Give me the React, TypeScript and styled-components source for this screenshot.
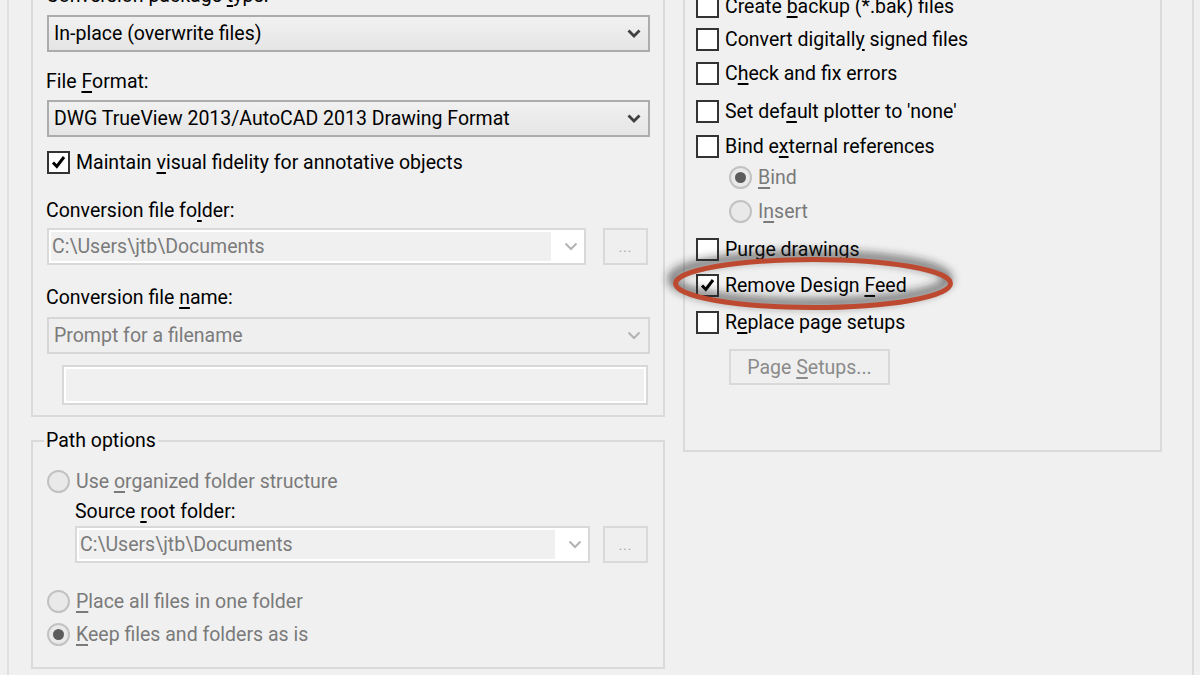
import React from "react";
import styled, { createGlobalStyle } from "styled-components";

const Global = createGlobalStyle`
  html, body { margin: 0; padding: 0; background: #f0f0f0; }
  body { font-family: Roboto, "Noto Sans", sans-serif; }
`;

const Screen = styled.div`
  width: 1200px;
  height: 675px;
  overflow: hidden;
  background: #f0f0f0;
  font-family: Roboto, "Noto Sans", sans-serif;
  font-size: 19.5px;
  color: #000;
`;

const Frame = styled.div`
  margin-left: 7px;
  width: 1187px;
  height: 675px;
  box-sizing: border-box;
  border-left: 2px solid #e1e1e1;
  border-right: 2px solid #dcdcdc;
  padding-left: 22px;
  display: grid;
  grid-template-columns: 634px 479px;
  column-gap: 18px;
  align-items: start;
`;

const Column = styled.div`
  display: flex;
  flex-direction: column;
  margin-top: -40px;
`;

const GroupBox = styled.fieldset<{ $pad: string; $mt?: number }>`
  margin: ${(p) => p.$mt ?? 0}px 0 0 0;
  min-width: 0;
  padding: ${(p) => p.$pad};
  border: 2px solid #dadada;
  display: flex;
  flex-direction: column;
  align-items: flex-start;
`;

const Legend = styled.legend`
  padding: 0 2px;
  margin-left: -3px;
  height: 24px;
  line-height: 24px;
  color: #000;
`;

const Mn = styled.u`
  text-decoration: underline;
  text-decoration-thickness: 1.5px;
  text-underline-offset: 3px;
`;

const Label = styled.div<{ $mt?: number; $ml?: number }>`
  height: 24px;
  line-height: 24px;
  white-space: nowrap;
  margin-top: ${(p) => p.$mt ?? 0}px;
  margin-left: ${(p) => p.$ml ?? -1}px;
`;

const Select = styled.div<{ $mt?: number; $disabled?: boolean }>`
  width: 603px;
  height: 37px;
  box-sizing: border-box;
  margin-top: ${(p) => p.$mt ?? 0}px;
  border: 2px solid ${(p) => (p.$disabled ? "#d6d6d6" : "#acacac")};
  background: ${(p) =>
    p.$disabled ? "#efefef" : "linear-gradient(#f1f1f1, #e5e5e5)"};
  color: ${(p) => (p.$disabled ? "#7b7b7b" : "#000")};
  display: flex;
  align-items: center;
  justify-content: space-between;
  padding: 0 7px 0 5px;
  white-space: nowrap;
`;

const ComboLine = styled.div<{ $mt?: number; $ml?: number; $gap: number }>`
  display: flex;
  gap: ${(p) => p.$gap}px;
  margin-top: ${(p) => p.$mt ?? 0}px;
  margin-left: ${(p) => p.$ml ?? 0}px;
`;

const Combo = styled.div<{ $w: number }>`
  width: ${(p) => p.$w}px;
  height: 37px;
  box-sizing: border-box;
  border: 2px solid #d9d9d9;
  background: #fff;
  padding: 2px;
  display: flex;
`;

const ComboText = styled.div`
  flex: 1;
  background: #f0f0f0;
  color: #7b7b7b;
  display: flex;
  align-items: center;
  padding-left: 1px;
  white-space: nowrap;
`;

const ComboArrow = styled.div`
  width: 31px;
  display: flex;
  align-items: center;
  justify-content: flex-end;
  padding-right: 4px;
  box-sizing: border-box;
`;

const Browse = styled.div`
  width: 45px;
  height: 37px;
  box-sizing: border-box;
  border: 2px solid #d9d9d9;
  background: #efefef;
  color: #a2a2a2;
  font-size: 13px;
  display: flex;
  align-items: flex-end;
  justify-content: center;
  padding-bottom: 8px;
  letter-spacing: 1px;
`;

const TextBox = styled.div<{ $mt?: number; $ml?: number }>`
  width: 586px;
  height: 40px;
  box-sizing: border-box;
  margin-top: ${(p) => p.$mt ?? 0}px;
  margin-left: ${(p) => p.$ml ?? 0}px;
  border: 2px solid #d8d8d8;
  box-shadow: inset 0 0 0 2px #fff;
  background: #f0f0f0;
`;

const Row = styled.div<{ $mt?: number; $ml?: number; $disabled?: boolean }>`
  position: relative;
  display: flex;
  align-items: center;
  gap: 6px;
  height: 24px;
  white-space: nowrap;
  margin-top: ${(p) => p.$mt ?? 0}px;
  margin-left: ${(p) => p.$ml ?? 0}px;
  color: ${(p) => (p.$disabled ? "#7a7a7a" : "#000")};
`;

const Box = styled.span`
  width: 23px;
  height: 23px;
  box-sizing: border-box;
  border: 2px solid #333;
  background: #fff;
  display: inline-flex;
  align-items: center;
  justify-content: center;
  flex: none;
`;

const RadioCircle = styled.span<{ $on?: boolean }>`
  width: 23px;
  height: 23px;
  box-sizing: border-box;
  border-radius: 50%;
  border: 2px solid #c2c2c2;
  background: #e9e9e9;
  display: inline-flex;
  align-items: center;
  justify-content: center;
  flex: none;
  &::after {
    content: "";
    width: 11px;
    height: 11px;
    border-radius: 50%;
    background: ${(p) => (p.$on ? "#5c5c5c" : "transparent")};
  }
`;

const PushButton = styled.div<{ $mt?: number; $ml?: number }>`
  width: 161px;
  height: 36px;
  box-sizing: border-box;
  margin-top: ${(p) => p.$mt ?? 0}px;
  margin-left: ${(p) => p.$ml ?? 0}px;
  border: 2px solid #d9d9d9;
  background: #efefef;
  color: #8b8b8b;
  display: flex;
  align-items: center;
  justify-content: center;
  white-space: nowrap;
`;

const Callout = styled.svg`
  position: absolute;
  left: -33px;
  top: -26px;
  width: 300px;
  height: 73px;
  overflow: visible;
  pointer-events: none;
`;

const mn = (s: string) => {
  const i = s.indexOf("&");
  if (i < 0) return s;
  return (
    <>
      {s.slice(0, i)}
      <Mn>{s[i + 1]}</Mn>
      {s.slice(i + 2)}
    </>
  );
};

const Chevron = ({ disabled }: { disabled?: boolean }) => (
  <svg width="14" height="9" viewBox="0 0 14 9">
    <path
      d="M1.5 1.5 L7 7 L12.5 1.5"
      fill="none"
      stroke={disabled ? "#b3b3b3" : "#3f3f3f"}
      strokeWidth={disabled ? 2 : 2.8}
    />
  </svg>
);

const Check = () => (
  <svg width="15" height="14" viewBox="0 0 15 14">
    <path d="M2 7.5 L5.8 11.5 L13 2" fill="none" stroke="#000" strokeWidth="3" />
  </svg>
);

const CheckRow = ({
  text,
  on,
  mt,
  ml,
  children,
}: {
  text: string;
  on?: boolean;
  mt?: number;
  ml?: number;
  children?: React.ReactNode;
}) => (
  <Row $mt={mt} $ml={ml}>
    <Box>{on && <Check />}</Box>
    <span>{mn(text)}</span>
    {children}
  </Row>
);

const RadioRow = ({ text, on, mt, ml }: { text: string; on?: boolean; mt?: number; ml?: number }) => (
  <Row $mt={mt} $ml={ml} $disabled>
    <RadioCircle $on={on} />
    <span>{mn(text)}</span>
  </Row>
);

const PathCombo = ({ w, mt, ml, gap }: { w: number; mt?: number; ml?: number; gap: number }) => (
  <ComboLine $mt={mt} $ml={ml} $gap={gap}>
    <Combo $w={w}>
      <ComboText>C:\Users\jtb\Documents</ComboText>
      <ComboArrow>
        <Chevron disabled />
      </ComboArrow>
    </Combo>
    <Browse>...</Browse>
  </ComboLine>
);

export default function App() {
  return (
    <Screen>
      <Global />
      <Frame>
        <Column>
          <GroupBox $pad="22px 13px 10px 14px">
            <Label>{mn("Conversion package &type:")}</Label>
            <Select $mt={7}>
              <span>In-place (overwrite files)</span>
              <Chevron />
            </Select>
            <Label $mt={18}>{mn("File &Format:")}</Label>
            <Select $mt={6}>
              <span>DWG TrueView 2013/AutoCAD 2013 Drawing Format</span>
              <Chevron />
            </Select>
            <CheckRow mt={13} on text="Maintain &visual fidelity for annotative objects" />
            <Label $mt={25}>{mn("Conversion file fo&lder:")}</Label>
            <PathCombo w={539} mt={5} gap={17} />
            <Label $mt={21}>{mn("Conversion file &name:")}</Label>
            <Select $mt={7} $disabled>
              <span>Prompt for a filename</span>
              <Chevron disabled />
            </Select>
            <TextBox $mt={11} $ml={15} />
          </GroupBox>
          <GroupBox $pad="16px 13px 21px 14px" $mt={12}>
            <Legend>Path options</Legend>
            <RadioRow text="Use &organized folder structure" />
            <Label $mt={7} $ml={28}>{mn("Source &root folder:")}</Label>
            <PathCombo w={515} mt={2} ml={28} gap={13} />
            <RadioRow mt={26} text="&Place all files in one folder" />
            <RadioRow mt={9} on text="&Keep files and folders as is" />
          </GroupBox>
        </Column>
        <GroupBox $pad="32px 11px 65px 11px" $mt={-40}>
          <CheckRow text="Create &backup (*.bak) files" />
          <CheckRow mt={9} text="Convert digitall&y signed files" />
          <CheckRow mt={10} text="C&heck and fix errors" />
          <CheckRow mt={14} text="Set def&ault plotter to 'none'" />
          <CheckRow mt={11} text="Bind e&xternal references" />
          <RadioRow mt={7} ml={33} on text="&Bind" />
          <RadioRow mt={10} ml={33} text="I&nsert" />
          <CheckRow mt={14} text="Purge drawings" />
          <CheckRow mt={12} on text="Remove Design &Feed">
            <Callout viewBox="0 0 300 73">
              <defs>
                <filter id="halo" x="-20%" y="-80%" width="140%" height="260%">
                  <feGaussianBlur stdDeviation="4" />
                </filter>
              </defs>
              <ellipse
                cx="147"
                cy="32"
                rx="138"
                ry="24"
                fill="none"
                stroke="rgba(40,40,40,0.6)"
                strokeWidth="9"
                filter="url(#halo)"
              />
              <ellipse cx="150" cy="36.5" rx="137.5" ry="24" fill="none" stroke="#bd4a30" strokeWidth="5" />
            </Callout>
          </CheckRow>
          <CheckRow mt={13} text="R&eplace page setups" />
          <PushButton $mt={15} $ml={33}>
            <span>{mn("Page &Setups...")}</span>
          </PushButton>
        </GroupBox>
      </Frame>
    </Screen>
  );
}
